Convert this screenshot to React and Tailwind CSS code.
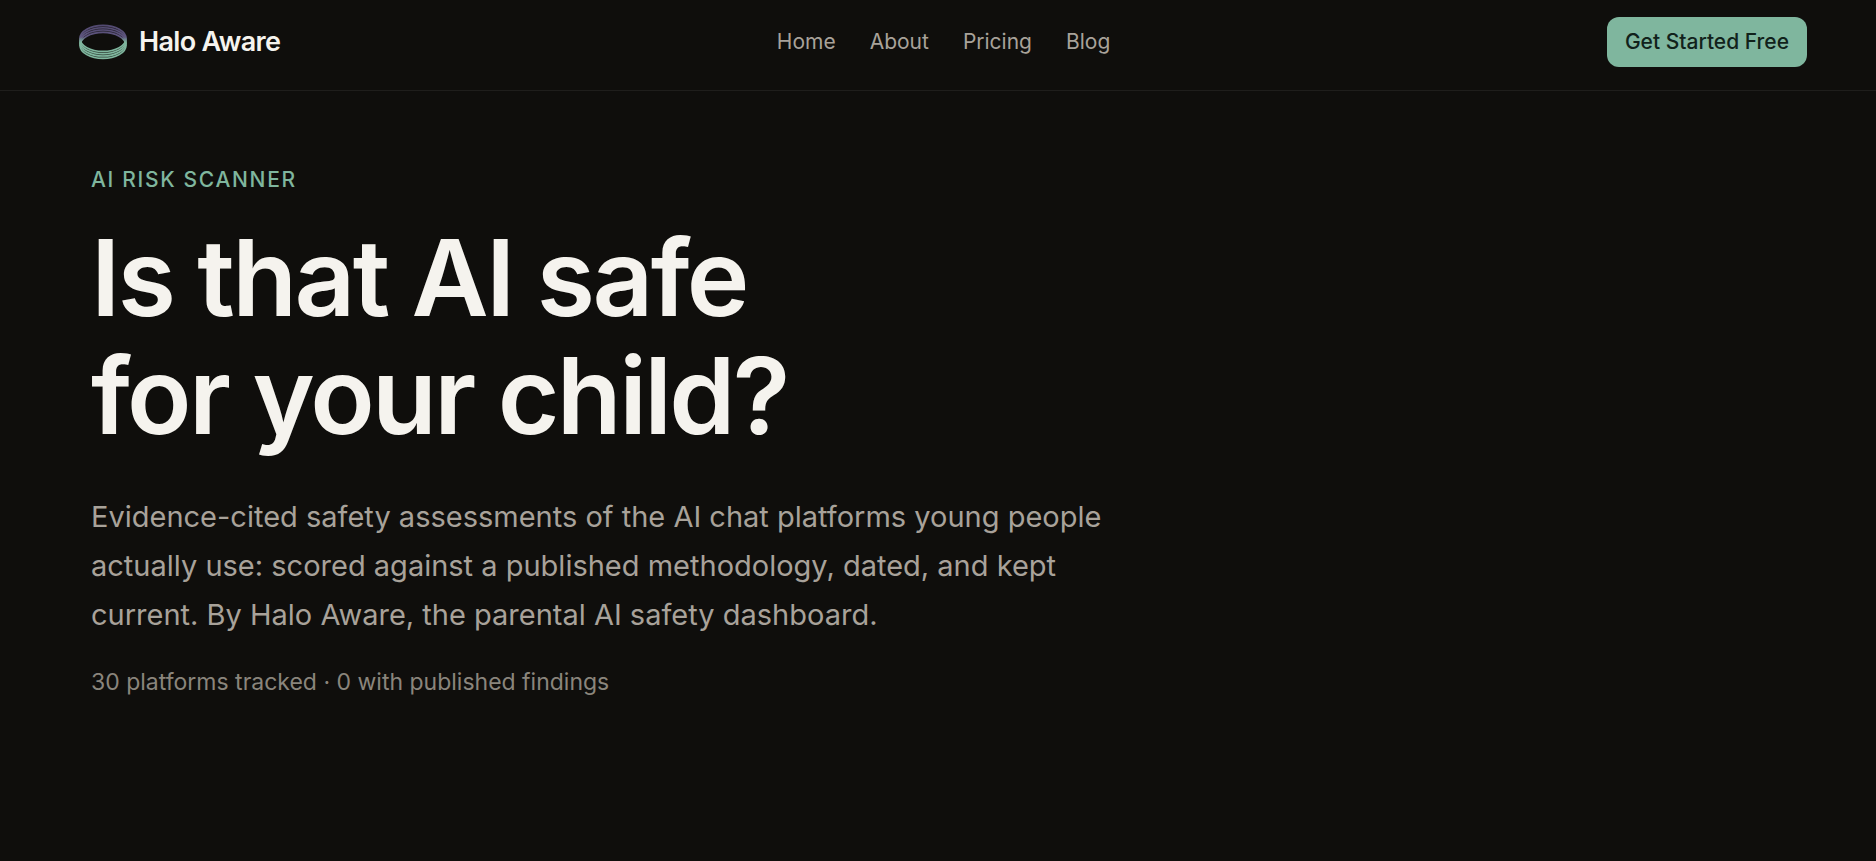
import React from 'react';

const navLinks = ['Home', 'About', 'Pricing', 'Blog'];

// Four stacked rings, violet on the far side and green on the near side
const ringOffsets = [20.4, 22.7, 25, 27.4];

const HaloLogo = () => (
    <svg viewBox="0 0 58 48" className="w-[58px] h-12" fill="none" stroke="url(#halo)" aria-hidden="true">
        <defs>
            <linearGradient id="halo" gradientUnits="userSpaceOnUse" x1="0" y1="6" x2="0" y2="42">
                <stop offset="0" stopColor="#51486f" />
                <stop offset="0.36" stopColor="#5f5680" />
                <stop offset="0.5" stopColor="#7fb69e" />
                <stop offset="1" stopColor="#7fb69e" />
            </linearGradient>
        </defs>
        {/* soft fill between the rings */}
        <g opacity="0.3" strokeWidth="2">
            <ellipse cx="29" cy="21.6" rx="22.6" ry="13" />
            <ellipse cx="29" cy="23.9" rx="22.6" ry="13" />
            <ellipse cx="29" cy="26.2" rx="22.6" ry="13" />
        </g>
        {ringOffsets.map((cy) => (
            <ellipse key={cy} cx="29" cy={cy} rx="23" ry="13" strokeWidth="1.6" />
        ))}
    </svg>
);

const Header = () => (
    <header className="border-b border-[#1f1e1c]">
        <div className="flex items-center justify-between pt-[17px] pb-[23px] pl-[74px] pr-[69px]">
            <a href="#" className="flex items-center gap-[7px]">
                <HaloLogo />
                <span className="text-[27px] leading-8 font-semibold tracking-tight text-[#f5f3ee]">Halo Aware</span>
            </a>
            <nav className="flex items-center gap-[34px]">
                {navLinks.map((label) => (
                    <a key={label} href="#" className="text-[21px] leading-8 text-[#a8a29a]">
                        {label}
                    </a>
                ))}
            </nav>
            <button className="h-[50px] px-[18px] rounded-xl bg-[#7fb69e] text-[21px] leading-8 font-medium text-[#11221b]">
                Get Started Free
            </button>
        </div>
    </header>
);

const App = () => {
    return (
        <div className="min-h-screen bg-[#0f0e0c] font-['Inter',sans-serif]">
            <Header />
            <main className="px-[91px] pt-[73px]">
                <p className="text-[21px] leading-8 font-medium uppercase tracking-[0.08em] text-[#7fb69e]">
                    AI Risk Scanner
                </p>
                <h1 className="mt-[23px] text-[106px] leading-[118px] font-semibold tracking-tight text-[#f5f3ee]">
                    Is that AI safe
                    <br />
                    for your child?
                </h1>
                <p className="mt-[37px] max-w-[1040px] text-[29px] leading-[49px] text-[#a8a29a]">
                    Evidence-cited safety assessments of the AI chat platforms young people actually use: scored against a
                    published methodology, dated, and kept current. By Halo Aware, the parental AI safety dashboard.
                </p>
                <p className="mt-[25px] text-[23px] leading-9 text-[#8a857c]">
                    30 platforms tracked · 0 with published findings
                </p>
            </main>
        </div>
    );
};

export default App;
